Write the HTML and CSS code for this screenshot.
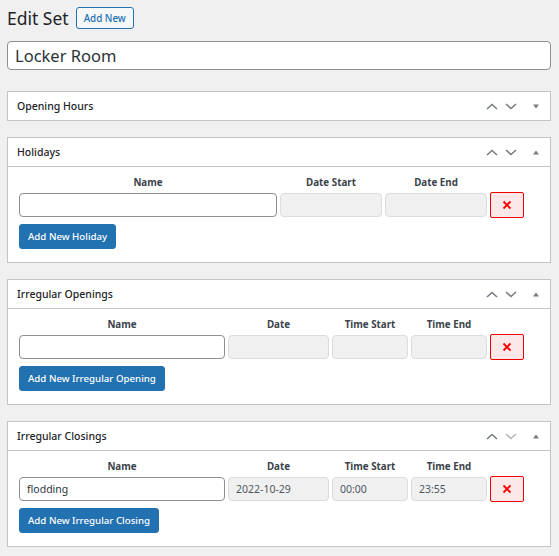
FILE: index.html
```html
<!DOCTYPE html>
<html>
<head>
<meta charset="utf-8">
<link rel="stylesheet" href="styles.css">
</head>
<body>
<div class="wrap">
  <div class="title-row">
    <h1 class="page-title">Edit Set</h1>
    <a class="title-action">Add New</a>
  </div>
  <input class="set-title" type="text" value="Locker Room">

  <div class="postbox closed">
    <div class="postbox-header">
      <h2 class="hndle">Opening Hours</h2>
      <div class="handle-actions">
        <svg class="ico chev" width="12" height="7" viewBox="0 0 12 7"><polyline points="1,6 6,1.5 11,6"/></svg>
        <svg class="ico chev" width="12" height="7" viewBox="0 0 12 7"><polyline points="1,1 6,5.5 11,1"/></svg>
        <svg class="ico tri" width="6" height="5" viewBox="0 0 6 5"><polygon points="0,0.5 6,0.5 3,4.5"/></svg>
      </div>
    </div>
  </div>

  <div class="postbox">
    <div class="postbox-header">
      <h2 class="hndle">Holidays</h2>
      <div class="handle-actions">
        <svg class="ico chev" width="12" height="7" viewBox="0 0 12 7"><polyline points="1,6 6,1.5 11,6"/></svg>
        <svg class="ico chev" width="12" height="7" viewBox="0 0 12 7"><polyline points="1,1 6,5.5 11,1"/></svg>
        <svg class="ico tri" width="6" height="5" viewBox="0 0 6 5"><polygon points="0,4.5 6,4.5 3,0.5"/></svg>
      </div>
    </div>
    <div class="inside">
      <div class="grid holidays">
        <div class="lbl">Name</div>
        <div class="lbl">Date Start</div>
        <div class="lbl">Date End</div>
        <div></div>
        <input class="field" type="text">
        <input class="field ro" type="text" readonly>
        <input class="field ro" type="text" readonly>
        <button class="del"><svg width="10" height="10" viewBox="0 0 10 10"><path d="M1.5 1.5 L8.5 8.5 M8.5 1.5 L1.5 8.5"/></svg></button>
      </div>
      <button class="btn-primary">Add New Holiday</button>
    </div>
  </div>

  <div class="postbox">
    <div class="postbox-header">
      <h2 class="hndle">Irregular Openings</h2>
      <div class="handle-actions">
        <svg class="ico chev" width="12" height="7" viewBox="0 0 12 7"><polyline points="1,6 6,1.5 11,6"/></svg>
        <svg class="ico chev" width="12" height="7" viewBox="0 0 12 7"><polyline points="1,1 6,5.5 11,1"/></svg>
        <svg class="ico tri" width="6" height="5" viewBox="0 0 6 5"><polygon points="0,4.5 6,4.5 3,0.5"/></svg>
      </div>
    </div>
    <div class="inside">
      <div class="grid irregular">
        <div class="lbl">Name</div>
        <div class="lbl">Date</div>
        <div class="lbl">Time Start</div>
        <div class="lbl">Time End</div>
        <div></div>
        <input class="field" type="text">
        <input class="field ro" type="text" readonly>
        <input class="field ro" type="text" readonly>
        <input class="field ro" type="text" readonly>
        <button class="del"><svg width="10" height="10" viewBox="0 0 10 10"><path d="M1.5 1.5 L8.5 8.5 M8.5 1.5 L1.5 8.5"/></svg></button>
      </div>
      <button class="btn-primary">Add New Irregular Opening</button>
    </div>
  </div>

  <div class="postbox">
    <div class="postbox-header">
      <h2 class="hndle">Irregular Closings</h2>
      <div class="handle-actions">
        <svg class="ico chev" width="12" height="7" viewBox="0 0 12 7"><polyline points="1,6 6,1.5 11,6"/></svg>
        <svg class="ico chev disabled" width="12" height="7" viewBox="0 0 12 7"><polyline points="1,1 6,5.5 11,1"/></svg>
        <svg class="ico tri" width="6" height="5" viewBox="0 0 6 5"><polygon points="0,4.5 6,4.5 3,0.5"/></svg>
      </div>
    </div>
    <div class="inside">
      <div class="grid irregular">
        <div class="lbl">Name</div>
        <div class="lbl">Date</div>
        <div class="lbl">Time Start</div>
        <div class="lbl">Time End</div>
        <div></div>
        <input class="field" type="text" value="flodding">
        <input class="field ro" type="text" value="2022-10-29" readonly>
        <input class="field ro" type="text" value="00:00" readonly>
        <input class="field ro" type="text" value="23:55" readonly>
        <button class="del"><svg width="10" height="10" viewBox="0 0 10 10"><path d="M1.5 1.5 L8.5 8.5 M8.5 1.5 L1.5 8.5"/></svg></button>
      </div>
      <button class="btn-primary">Add New Irregular Closing</button>
    </div>
  </div>
</div>
</body>
</html>
```

FILE: styles.css
```css
html, body {
  margin: 0;
  padding: 0;
  background: #f0f0f1;
}
body {
  font-family: "Noto Sans", "Open Sans", sans-serif;
  color: #3c434a;
  font-size: 11px;
}
.wrap {
  padding: 7px 8px 0 7px;
}
.title-row {
  display: flex;
  align-items: center;
  gap: 7px;
  height: 22px;
}
.page-title {
  margin: 0;
  font-size: 17.5px;
  font-weight: 400;
  color: #1d2327;
  line-height: 22px;
}
.title-action {
  display: inline-flex;
  align-items: center;
  box-sizing: border-box;
  height: 22px;
  padding: 0 7px;
  border: 1px solid #2271b1;
  border-radius: 3px;
  color: #2271b1;
  background: #f6f7f7;
  font-size: 9.8px;
  font-weight: 500;
}
.set-title {
  display: block;
  box-sizing: border-box;
  width: 100%;
  height: 29px;
  margin: 12px 0 0;
  padding: 0 7px;
  border: 1px solid #8c8f94;
  border-radius: 4px;
  background: #fff;
  font-family: inherit;
  font-size: 16.5px;
  color: #2c3338;
  outline: none;
}
.postbox {
  margin-top: 21px;
  background: #fff;
  border: 1px solid #c3c4c7;
}
.postbox + .postbox {
  margin-top: 16px;
}
.postbox-header {
  display: flex;
  align-items: center;
  justify-content: space-between;
  height: 28px;
  border-bottom: 1px solid #c3c4c7;
}
.postbox.closed .postbox-header {
  border-bottom: 0;
}
.hndle {
  margin: 0;
  padding-left: 9px;
  font-size: 10.5px;
  font-weight: 500;
  color: #1d2327;
}
.handle-actions {
  display: flex;
  align-items: center;
  padding-right: 11px;
}
.ico.chev {
  fill: none;
  stroke: #787c82;
  stroke-width: 1.6;
  margin-right: 7px;
}
.ico.chev.disabled {
  stroke: #b4b7ba;
}
.ico.tri {
  fill: #787c82;
  margin-left: 9px;
}
.inside {
  padding: 9px 11px 13px;
}
.grid {
  display: grid;
  column-gap: 3px;
  align-items: center;
  grid-template-rows: 14px 26px;
  row-gap: 2px;
}
.grid.holidays {
  grid-template-columns: 258px 102px 102px 34px;
}
.grid.irregular {
  grid-template-columns: 206px 101px 76px 76px 34px;
}
.lbl {
  text-align: center;
  font-weight: 700;
  font-size: 9.8px;
  line-height: 14px;
  height: 14px;
  color: #3c434a;
}
.field {
  box-sizing: border-box;
  width: 100%;
  height: 24px;
  padding: 0 7px;
  border: 1px solid #8c8f94;
  border-radius: 4px;
  background: #fff;
  font-family: inherit;
  font-size: 10.5px;
  color: #2c3338;
  outline: none;
}
.field.ro {
  background: #f0f0f1;
  border-color: #dcdcde;
  color: #50575e;
}
.del {
  box-sizing: border-box;
  width: 34px;
  height: 26px;
  padding: 0;
  display: flex;
  align-items: center;
  justify-content: center;
  border: 1px solid #e00;
  border-radius: 2px;
  background: #fce8e8;
}
.del svg path {
  stroke: #f00;
  stroke-width: 1.8;
  fill: none;
}
.btn-primary {
  display: block;
  box-sizing: border-box;
  margin-top: 6px;
  height: 25px;
  padding: 0 8px;
  border: 1px solid #2271b1;
  border-radius: 3px;
  background: #2271b1;
  color: #fff;
  font-family: inherit;
  font-size: 9.7px;
  font-weight: 500;
}
```
